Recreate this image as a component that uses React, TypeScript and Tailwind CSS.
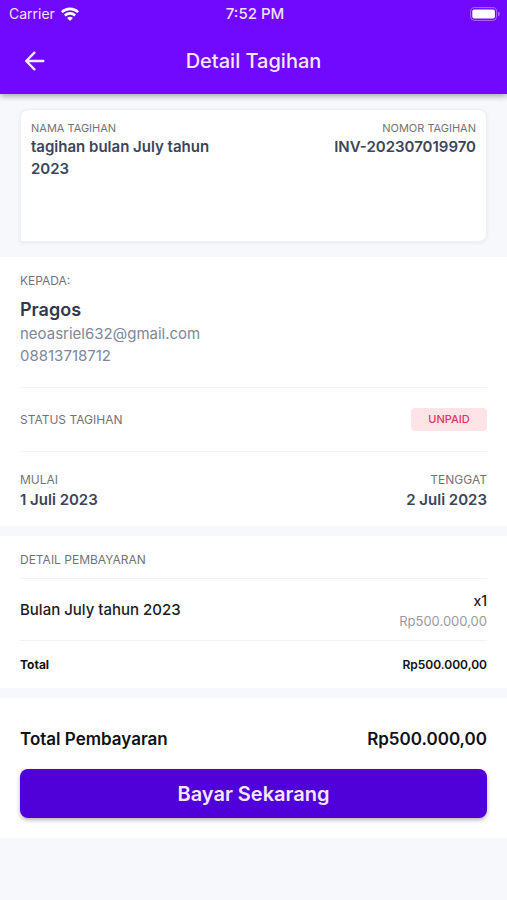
import type { ReactNode } from "react";

const LABEL = "text-xs leading-4 text-[#737377]";
const STRONG = "text-[15px] font-semibold text-[#3b455c]";

function WifiIcon() {
  return (
    <svg width="18" height="14" viewBox="0 0 18 14" fill="none" stroke="currentColor" strokeWidth="2.6" aria-hidden="true">
      <path d="M0.9 5.2C5.4 0.7 12.6 0.7 17.1 5.2" />
      <path d="M3.9 8.5C6.8 5.7 11.2 5.7 14.1 8.5" />
      <path d="M9 14L6.1 11C7.7 9.4 10.3 9.4 11.9 11Z" fill="currentColor" stroke="none" />
    </svg>
  );
}

function BatteryIcon() {
  return (
    <svg width="31" height="14" viewBox="0 0 31 14" fill="none" aria-hidden="true">
      <rect x="0.6" y="0.6" width="26" height="12.8" rx="4" stroke="white" strokeOpacity="0.4" />
      <rect x="2.3" y="2.5" width="22.6" height="9" rx="2" fill="white" />
      <path d="M28 4.8C29.2 5.2 29.8 6 29.8 7C29.8 8 29.2 8.8 28 9.2Z" fill="white" fillOpacity="0.4" />
    </svg>
  );
}

function BackIcon() {
  return (
    <svg
      width="20"
      height="20"
      viewBox="0 0 20 20"
      fill="none"
      stroke="currentColor"
      strokeWidth="2.3"
      strokeLinecap="round"
      strokeLinejoin="round"
      aria-hidden="true"
    >
      <path d="M18.4 10H1.4M9.4 1.6L1.2 10L9.4 18.4" />
    </svg>
  );
}

function Header() {
  return (
    <header className="bg-[#7108ff] text-white shadow-[0_2px_6px_rgba(0,0,0,0.35)]">
      <div className="grid h-7 grid-cols-3 items-center pl-[9px] pr-1.5 leading-5 text-[#f0e2ff]">
        <span className="flex items-center gap-1.5 text-sm">
          Carrier
          <span className="text-white">
            <WifiIcon />
          </span>
        </span>
        <span className="text-center text-[15px] font-medium">7:52 PM</span>
        <span className="flex justify-end">
          <BatteryIcon />
        </span>
      </div>
      <div className="grid h-[66px] grid-cols-[40px_1fr_40px] items-center px-[15px]">
        <button type="button" aria-label="Kembali" className="flex h-10 w-10 items-center justify-center text-[#f5ebff]">
          <BackIcon />
        </button>
        <h1 className="text-center text-xl font-medium leading-6 text-[#f3e8ff]">Detail Tagihan</h1>
      </div>
    </header>
  );
}

function Field({ label, right, children }: { label: string; right?: boolean; children: ReactNode }) {
  return (
    <div className={right ? "text-right" : ""}>
      <dt className={LABEL}>{label}</dt>
      <dd className={`${STRONG} leading-6`}>{children}</dd>
    </div>
  );
}

export default function App() {
  return (
    <div className="min-h-screen bg-[#f6f8fb] font-['Inter',sans-serif]">
      <Header />
      <main>
        <div className="px-5 py-[15px]">
          <dl className="flex min-h-[133px] justify-between rounded-lg rounded-bl-none border border-[#eeeff2] bg-white px-2.5 pt-2.5 shadow-[0_1px_4px_rgba(0,0,0,0.06)]">
            <div className="w-[200px]">
              <dt className="text-[11px] leading-4 text-[#737377]">NAMA TAGIHAN</dt>
              <dd className={`${STRONG} leading-[22px]`}>tagihan bulan July tahun 2023</dd>
            </div>
            <div className="text-right">
              <dt className="text-[11px] leading-4 text-[#737377]">NOMOR TAGIHAN</dt>
              <dd className={`${STRONG} leading-[22px]`}>INV-202307019970</dd>
            </div>
          </dl>
        </div>

        <section className="bg-white px-5">
          <div className="border-b border-[#f3f3f5] pt-4 pb-5">
            <h2 className={LABEL}>KEPADA:</h2>
            <p className="mt-2 text-lg font-semibold leading-[26px] text-[#2f3850]">Pragos</p>
            <p className="text-[15px] leading-[22px] text-[#80869c]">neoasriel632@gmail.com</p>
            <p className="text-[15px] leading-[22px] text-[#80869c]">08813718712</p>
          </div>
          <div className="flex items-center justify-between border-b border-[#f3f3f5] py-5">
            <h2 className={LABEL}>STATUS TAGIHAN</h2>
            <span className="w-[76px] rounded bg-[#ffe3e6] text-center text-[11px] font-medium leading-[23px] text-[#e5345f]">
              UNPAID
            </span>
          </div>
          <dl className="flex justify-between pt-5 pb-3.5">
            <Field label="MULAI">1 Juli 2023</Field>
            <Field label="TENGGAT" right>
              2 Juli 2023
            </Field>
          </dl>
        </section>

        <section className="mt-2.5 bg-white px-5 pt-4">
          <h2 className={`${LABEL} pb-2.5`}>DETAIL PEMBAYARAN</h2>
          <table className="w-full">
            <tbody>
              <tr className="border-y border-[#f3f3f5]">
                <th scope="row" className="text-left text-[15px] font-medium leading-5 text-[#1b1b1d]">
                  Bulan July tahun 2023
                </th>
                <td className="pt-3 pb-[9px] text-right">
                  <div className="text-sm font-medium leading-5 text-[#1b1b1d]">x1</div>
                  <div className="text-[13px] leading-5 text-[#9b9b9e]">Rp500.000,00</div>
                </td>
              </tr>
              <tr className="text-xs font-semibold leading-4 text-[#111113]">
                <th scope="row" className="pt-4 pb-[15px] text-left">
                  Total
                </th>
                <td className="pt-4 pb-[15px] text-right">Rp500.000,00</td>
              </tr>
            </tbody>
          </table>
        </section>

        <section className="mt-2.5 bg-white px-5 pt-[27px] pb-5">
          <div className="flex justify-between text-[17px] font-semibold leading-7 text-[#111113]">
            <span>Total Pembayaran</span>
            <span>Rp500.000,00</span>
          </div>
          <button
            type="button"
            className="mt-4 h-[49px] w-full rounded-lg bg-[#5000d8] text-xl font-semibold leading-7 text-[#f3e8ff] shadow-[0_2px_4px_rgba(0,0,0,0.3)]"
          >
            Bayar Sekarang
          </button>
        </section>
      </main>
    </div>
  );
}
